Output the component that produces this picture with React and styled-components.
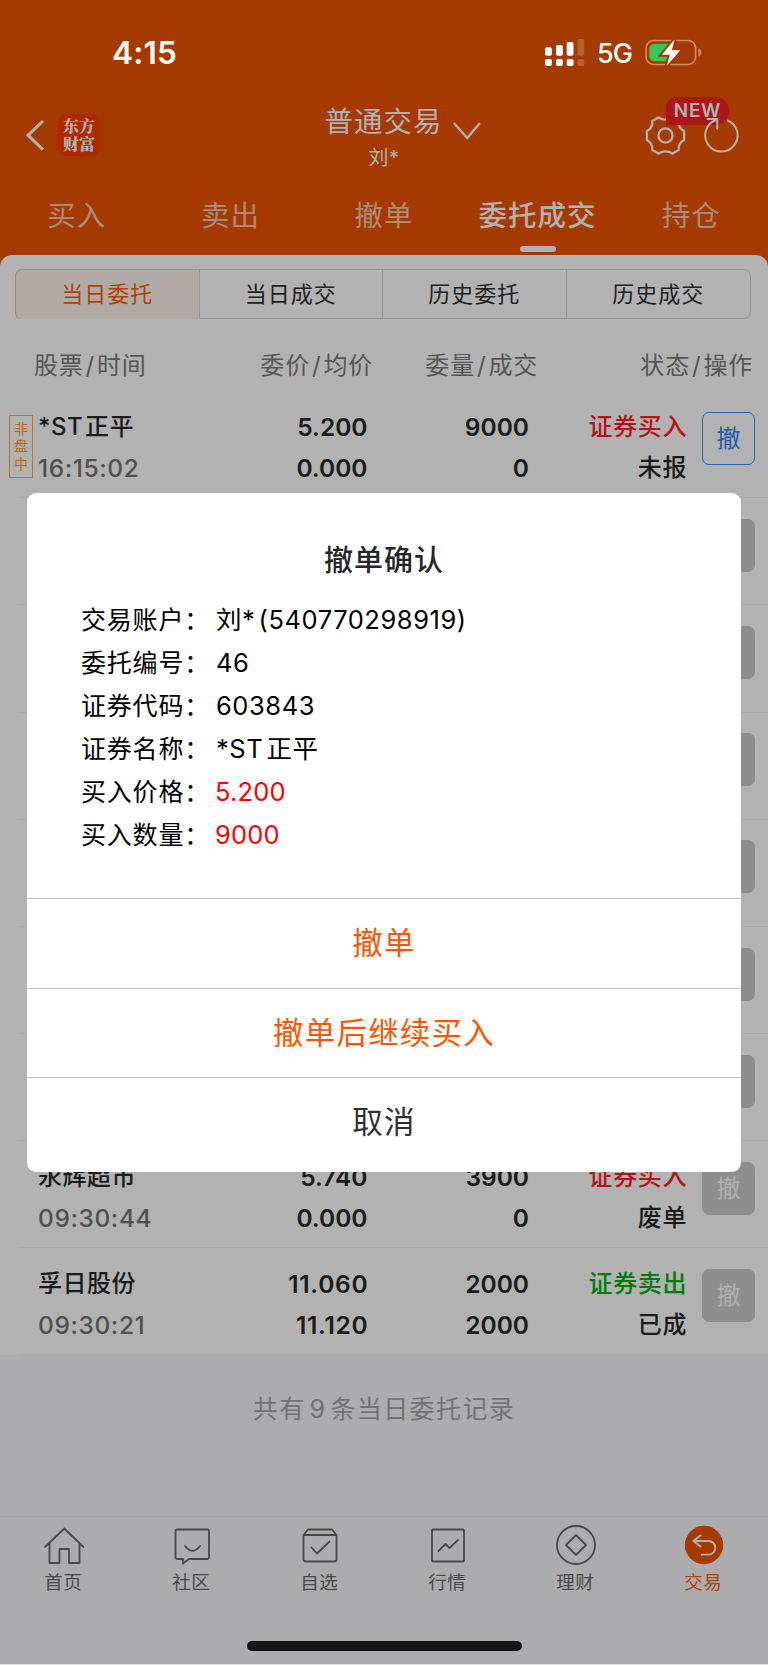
import React from 'react';
import styled, { createGlobalStyle, css } from 'styled-components';

const GlobalStyle = createGlobalStyle`
  * { box-sizing: border-box; }
  html, body { margin: 0; padding: 0; background: #e2e2e3; }
  body { font-family: Inter, "Noto Sans CJK SC", sans-serif; -webkit-font-smoothing: antialiased; }
  button { font: inherit; margin: 0; padding: 0; border: 0; background: none; }
`;

const Screen = styled.div`
  position: relative;
  display: flex;
  flex-direction: column;
  width: 768px;
  height: 1664px;
  overflow: hidden;
  background: #acacae;
`;

const Top = styled.header`
  height: 267px;
  margin-bottom: -12px;
  flex: none;
  background: #a43a00;
  color: #b2b2b2;
`;

const StatusBar = styled.div`
  display: flex;
  align-items: center;
  height: 105px;
  padding: 0 66px 0 112px;
  color: #fff;
`;

const Clock = styled.span`
  flex: 1;
  font-size: 31.5px;
  font-weight: 600;
  letter-spacing: 0.2px;
  line-height: 40px;
`;

const Network = styled.span`
  margin: 1px 12px 0 12px;
  font-size: 27px;
  font-weight: 500;
  letter-spacing: -1px;
  width: 36px;
`;

const NavBar = styled.div`
  display: grid;
  grid-template-columns: 200px 1fr 200px;
  height: 75px;
`;

const NavLeft = styled.div`
  display: flex;
  padding: 9px 0 0 25px;
  gap: 13px;
`;

const BackIcon = styled.svg`
  margin-top: 5px;
`;

const Brand = styled.div`
  width: 42px;
  height: 42px;
  padding: 3px 3px 0 5px;
  border-radius: 8px;
  background: #ae2b00;
  font: 900 16px/18px "Noto Serif CJK SC", "Noto Sans CJK SC", sans-serif;
`;

const NavTitle = styled.div`
  display: flex;
  flex-direction: column;
  align-items: center;
`;

const TitleLine = styled.div`
  display: flex;
  align-items: center;
  gap: 10px;
  height: 31px;
  margin-top: -1.5px;
  padding-left: 37px;
  font-size: 28.5px;
  letter-spacing: 1px;
  white-space: nowrap;

  svg { margin-top: 24px; }
`;

const Account = styled.div`
  margin-top: 10.5px;
  font-size: 20px;
  line-height: 26px;
  letter-spacing: 0.5px;
`;

const NavRight = styled.div`
  position: relative;
  display: flex;
  align-items: flex-start;
  justify-content: flex-end;
  gap: 17px;
  padding: 10px 29px 0 0;
`;

const RefreshIcon = styled.svg`
  position: relative;
  z-index: 2;
`;

const NewBadge = styled.span`
  position: absolute;
  left: 98px;
  top: -8px;
  z-index: 1;
  width: 63px;
  height: 28px;
  border-radius: 10px 14px 14px 0;
  background: #ab1619;
  font-size: 19px;
  font-weight: 600;
  line-height: 28px;
  letter-spacing: 0.7px;
  text-align: center;
`;

const Tabs = styled.nav`
  display: grid;
  grid-template-columns: repeat(5, 1fr);
  height: 75px;
`;

const Tab = styled.div`
  display: flex;
  flex-direction: column;
  align-items: center;
  padding-top: 16px;
  font-size: 28.5px;
  line-height: 40px;
  letter-spacing: 1px;
  white-space: nowrap;
  color: ${(p) => (p.$active ? '#b2b2b2' : '#ae8b79')};
  font-weight: ${(p) => (p.$active ? 500 : 400)};

  &::after {
    content: '';
    display: ${(p) => (p.$active ? 'block' : 'none')};
    width: 36px;
    height: 5.5px;
    margin-top: 10px;
    border-radius: 3px;
    background: #b2b2b2;
  }
`;

const Panel = styled.main`
  position: relative;
  flex: none;
  padding-top: 14px;
  border-radius: 12px 12px 0 0;
  background: #b2b2b2;
`;

const Segments = styled.div`
  display: grid;
  grid-template-columns: repeat(4, 1fr);
  width: 736px;
  height: 50px;
  margin-left: 15px;
  border: 1px solid #93959a;
  border-radius: 7px;
`;

const Segment = styled.button`
  border-right: 1px solid #93959a;
  font-size: 22px;
  line-height: 49px;
  letter-spacing: 1px;
  color: #222;

  &:last-child { border-right: 0; border-radius: 0 6px 6px 0; }

  ${(p) => p.$active && css`
    border-radius: 6px 0 0 6px;
    background: #b2aaa7;
    box-shadow: -1px 0 0 #ae8068;
    color: #ad4206;
  `}
`;

const ColumnHeads = styled.div`
  display: grid;
  grid-template-columns: 174px 165px 165px 1fr;
  height: 72.2px;
  padding: 11px 15px 0 34px;
  font-size: 24px;
  line-height: 71px;
  letter-spacing: 0.8px;
  color: #565656;

  span { text-align: right; white-space: nowrap; }
  span:first-child { text-align: left; }
  i { margin: 0 2px; font-style: normal; }
`;

const Row = styled.div`
  position: relative;
  display: grid;
  grid-template-columns: 168px 160.5px 161.5px 157.5px 53px;
  height: 107.14px;
  margin-left: 18px;
  padding: 16.3px 0 0 21px;
  border-bottom: 1px solid #aaaaaa;
  font-size: 24.5px;
  line-height: 40.8px;
  font-weight: 600;
  color: #1b1b1b;
  white-space: nowrap;
`;

const SessionTag = styled.span`
  position: absolute;
  left: -9px;
  top: 24px;
  width: 24px;
  height: 63px;
  padding-top: 5px;
  border: 1px solid #c0712a;
  color: #bb6414;
  font-size: 13.5px;
  font-weight: 400;
  line-height: 17.3px;
  text-align: center;
  white-space: normal;
`;

const Stock = styled.div`
  margin-left: -1px;
  font-size: 24px;
  font-weight: 500;
  letter-spacing: 0.5px;
  word-spacing: -5px;
`;

const Time = styled.div`
  margin-left: -1px;
  font-weight: 500;
  letter-spacing: 0.6px;
  color: #505050;
`;

const Figures = styled.div`
  margin-right: ${(p) => (p.$wide ? '-0.8px' : '0')};
  text-align: right;
  letter-spacing: ${(p) => (p.$wide ? '0.7px' : '0')};
`;

const Status = styled.div`
  margin-right: -0.5px;
  text-align: right;
  font-size: 24px;
  font-weight: 500;
  letter-spacing: 0.6px;
`;

const Side = styled.div`
  color: ${(p) => (p.$side === 'sell' ? '#007c06' : '#b5141a')};
`;

const RevokeButton = styled.button`
  width: 53px;
  height: 53px;
  margin: 4.5px 0 0 15.5px;
  border: 1px solid ${(p) => (p.$enabled ? '#2760aa' : '#8e8e8e')};
  border-radius: 7px;
  background: ${(p) => (p.$enabled ? 'transparent' : '#8e8e8e')};
  color: ${(p) => (p.$enabled ? '#205cad' : '#b0b0b0')};
  font-size: 24px;
  font-weight: 400;
  line-height: 51px;
`;

const Summary = styled.div`
  flex: 1;
  padding-top: 34px;
  text-align: center;
  font-size: 25px;
  line-height: 40px;
  letter-spacing: 1.4px;
  word-spacing: -4.5px;
  color: #727273;
`;

const BottomNav = styled.nav`
  flex: none;
  display: grid;
  grid-template-columns: repeat(6, 1fr);
  height: 125px;
  padding-top: 8px;
  border-top: 1px solid #a3a3a4;
`;

const NavItem = styled.div`
  display: flex;
  flex-direction: column;
  align-items: center;
  font-size: 18.5px;
  line-height: 28px;
  letter-spacing: 0.5px;
  color: ${(p) => (p.$active ? '#ad4206' : '#484849')};

  span { margin-left: -1.5px; }
  svg { display: block; margin-bottom: 3px; }
`;

const HomeArea = styled.div`
  flex: none;
  height: 23px;

  &::before {
    content: '';
    display: block;
    width: 275px;
    height: 9.5px;
    margin: 0 auto;
    border-radius: 5px;
    background: #141414;
  }
`;

const Dialog = styled.section`
  position: absolute;
  left: 27px;
  top: 493px;
  width: 714px;
  height: 679px;
  display: flex;
  flex-direction: column;
  border-radius: 9px;
  background: #fff;
`;

const DialogTitle = styled.h2`
  margin: 47px 0 0;
  text-align: center;
  font-size: 29px;
  line-height: 42px;
  font-weight: 500;
  letter-spacing: 1px;
  color: #262626;
`;

const Details = styled.dl`
  flex: 1;
  margin: 17.3px 0 0;
  padding-left: 54px;
  font-size: 25.5px;
  color: #000;
`;

const Detail = styled.div`
  display: flex;
  line-height: 42.9px;
`;

const Label = styled.dt`
  width: 135px;
  font-size: 25px;
  letter-spacing: 0.8px;
`;

const Value = styled.dd`
  margin: 0 0 0 ${(p) => (p.$alert ? '-1px' : '0')};
  letter-spacing: ${(p) => (p.$alert ? '0.2px' : '0.55px')};
  word-spacing: -4.5px;
  color: ${(p) => (p.$alert ? '#ff0000' : '#000')};
`;

const Action = styled.button`
  flex: none;
  display: block;
  height: ${(p) => p.$height}px;
  border-top: 1px solid #c6c6c8;
  font-size: 30.5px;
  line-height: 88px;
  padding-bottom: ${(p) => p.$height - 89}px;
  letter-spacing: 1.2px;
  color: ${(p) => (p.$muted ? '#303030' : '#ff5500')};
`;

const orders = [
  { name: '*ST 正平', time: '16:15:02', price: '5.200', avg: '0.000', qty: '9000', done: '0', label: '证券买入', state: '未报', open: true },
  {}, {}, {}, {}, {}, {},
  { name: '永辉超市', time: '09:30:44', price: '5.740', avg: '0.000', qty: '3900', done: '0', label: '证券买入', state: '废单' },
  { name: '孚日股份', time: '09:30:21', price: '11.060', avg: '11.120', qty: '2000', done: '2000', label: '证券卖出', side: 'sell', state: '已成' },
];

const heads = [['股票', '时间'], ['委价', '均价'], ['委量', '成交'], ['状态', '操作']];

const details = [
  ['交易账户：', '刘* (540770298919)'],
  ['委托编号：', '46'],
  ['证券代码：', '603843'],
  ['证券名称：', '*ST 正平'],
  ['买入价格：', '5.200', true],
  ['买入数量：', '9000', true],
];

const Line = ({ children, size = 40, w = 1.8 }) => (
  <svg width={size} height={size} viewBox="0 0 40 40" fill="none" stroke="currentColor" strokeWidth={w} strokeLinejoin="round" strokeLinecap="round">
    {children}
  </svg>
);

const navItems = [
  ['首页', <Line key="i"><path d="M1 22 20.300 3.500 39.500 22M5.500 18.500V38H15.500V24H25V38H35.500V18.500" /></Line>],
  ['社区', <Line key="i"><path d="M5 4.500H35.500a1.500 1.500 0 0 1 1.500 1.500V32.500a1.500 1.500 0 0 1-1.500 1.500H17L11 38.500V34H5a1.500 1.500 0 0 1-1.500-1.500V6a1.500 1.500 0 0 1 1.500-1.500M13 21q7.500 9.500 15 0" /></Line>],
  ['自选', <Line key="i"><path d="M3.500 10 8 4.500H32L36.500 10V34.500a2 2 0 0 1-2 2H5.500a2 2 0 0 1-2-2ZM3.500 10H36.500M11.500 22.500 17 28.500 29.500 16.500" /></Line>],
  ['行情', <Line key="i"><rect x="4" y="4.500" width="32" height="32" rx="1" /><path d="M10.500 26 17.500 19 21.500 23 30 15" /></Line>],
  ['理财', <Line key="i"><circle cx="20" cy="20" r="19" /><path d="M20 10 30 20 20 30 10 20Z" /></Line>],
  ['交易', (
    <svg key="i" width="40" height="40" viewBox="0 0 40 40" fill="none" stroke="#b2b2b2" strokeWidth="1.9">
      <circle cx="20" cy="20" r="19.2" fill="#a43a00" stroke="none" />
      <path d="M17 10 9.500 16 17 22M9.500 16H24.500a6.800 6.800 0 0 1 0 13.600H17" />
    </svg>
  )],
];

export default function App() {
  return (
    <>
      <GlobalStyle />
      <Screen>
        <Top>
          <StatusBar>
            <Clock>4:15</Clock>
            <svg width="40" height="28" viewBox="545 38 40 28" fill="#fff">
              <rect x="545" y="46.300" width="6.800" height="8.400" rx="1.800" />
              <rect x="556" y="44" width="6.800" height="10.700" rx="1.800" />
              <rect x="566.700" y="41" width="6.800" height="13.700" rx="1.800" />
              <rect x="577.400" y="38" width="6.800" height="16.700" rx="1.800" opacity=".2" />
              <rect x="545" y="58" width="6.800" height="7" rx="1.800" />
              <rect x="556" y="58" width="6.800" height="7" rx="1.800" />
              <rect x="566.700" y="58" width="6.800" height="7" rx="1.800" />
              <rect x="577.400" y="58" width="6.800" height="7" rx="1.800" opacity=".2" />
            </svg>
            <Network>5G</Network>
            <svg width="57" height="28" viewBox="644.700 38.300 57 28" fill="none">
              <rect x="645.800" y="39.800" width="49.500" height="24" rx="7.500" stroke="#d08f6c" strokeWidth="1.600" />
              <path d="M698 47.500q3 1 3 4.300t-3 4.300Z" fill="#c98664" />
              <path d="M654 43H669L661.500 54.500H668L666 60.500H654a5 5 0 0 1-5-5V48a5 5 0 0 1 5-5Z" fill="#34c759" />
              <path d="M674.500 38.500 661.500 54H669.500L666.500 65 680 49.500H671.500Z" fill="#fff" stroke="#a43a00" strokeWidth="4" />
              <path d="M674.500 38.500 661.500 54H669.500L666.500 65 680 49.500H671.500Z" fill="#fff" />
            </svg>
          </StatusBar>
          <NavBar>
            <NavLeft>
              <BackIcon width="20" height="34" viewBox="0 0 20 34" fill="none" stroke="#b2b2b2" strokeWidth="3">
                <path d="M18 2 3 16.300 18 30.700" />
              </BackIcon>
              <Brand>东方财富</Brand>
            </NavLeft>
            <NavTitle>
              <TitleLine>
                普通交易
                <svg width="28" height="20" viewBox="0 0 28 20" fill="none" stroke="#b2b2b2" strokeWidth="2.400">
                  <path d="M1 2 14.200 17 27 2" />
                </svg>
              </TitleLine>
              <Account>刘*</Account>
            </NavTitle>
            <NavRight>
              <svg width="41" height="41" viewBox="-20.500 -20.500 41 41" fill="none" stroke="#b2b2b2" strokeWidth="2.300" strokeLinejoin="round">
                <path d="M-7 18Q0 13.600 7 18L13.200 14.400Q12.600 7.600 18.600 4.500V-4.500Q12.600 -7.600 13.200 -14.400L7 -18Q0 -13.600 -7 -18L-13.200 -14.400Q-12.600 -7.600 -18.600 -4.500V4.500Q-12.600 7.600 -13.200 14.400Z" />
                <circle cx="0" cy="0" r="7.100" />
              </svg>
              <NewBadge>NEW</NewBadge>
              <RefreshIcon width="36" height="42" viewBox="703 115 36 42" fill="none" stroke="#b2b2b2" strokeWidth="2">
                <path d="M727.200 120.200A16.200 16.200 0 1 1 716.800 119.800M706.700 119H717.200V129.500" />
              </RefreshIcon>
            </NavRight>
          </NavBar>
          <Tabs>
            <Tab>买入</Tab>
            <Tab>卖出</Tab>
            <Tab>撤单</Tab>
            <Tab $active>委托成交</Tab>
            <Tab>持仓</Tab>
          </Tabs>
        </Top>
        <Panel>
          <Segments>
            <Segment $active>当日委托</Segment>
            <Segment>当日成交</Segment>
            <Segment>历史委托</Segment>
            <Segment>历史成交</Segment>
          </Segments>
          <ColumnHeads>
            {heads.map(([first, second]) => (
              <span key={first}>{first}<i>/</i>{second}</span>
            ))}
          </ColumnHeads>
          {orders.map((o, i) => (
            <Row key={i}>
              {o.open && <SessionTag>非盘中</SessionTag>}
              <div>
                <Stock>{o.name}</Stock>
                <Time>{o.time}</Time>
              </div>
              <Figures $wide={o.side === 'sell'}>{o.price}<br />{o.avg}</Figures>
              <Figures>{o.qty}<br />{o.done}</Figures>
              <Status>
                <Side $side={o.side}>{o.label}</Side>
                {o.state}
              </Status>
              <RevokeButton $enabled={o.open}>{o.name ? '撤' : ''}</RevokeButton>
            </Row>
          ))}
        </Panel>
        <Summary>共有 9 条当日委托记录</Summary>
        <BottomNav>
          {navItems.map(([label, icon]) => (
            <NavItem key={label} $active={label === '交易'}>
              {icon}
              <span>{label}</span>
            </NavItem>
          ))}
        </BottomNav>
        <HomeArea />
        <Dialog role="dialog">
          <DialogTitle>撤单确认</DialogTitle>
          <Details>
            {details.map(([label, value, alert]) => (
              <Detail key={label}>
                <Label>{label}</Label>
                <Value $alert={alert}>{value}</Value>
              </Detail>
            ))}
          </Details>
          <Action $height={90}>撤单</Action>
          <Action $height={89}>撤单后继续买入</Action>
          <Action $height={95} $muted>取消</Action>
        </Dialog>
      </Screen>
    </>
  );
}
